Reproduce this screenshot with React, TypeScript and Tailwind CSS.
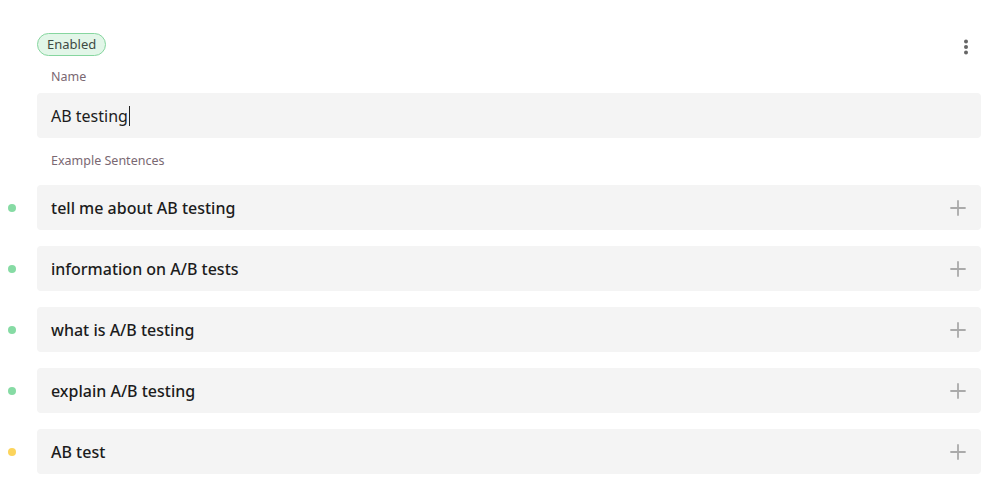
import { Plus } from "lucide-react";

const sentences = [
  { text: "tell me about AB testing", dot: "bg-[#86dba4]" },
  { text: "information on A/B tests", dot: "bg-[#86dba4]" },
  { text: "what is A/B testing", dot: "bg-[#86dba4]" },
  { text: "explain A/B testing", dot: "bg-[#86dba4]" },
  { text: "AB test", dot: "bg-[#fcd45c]" },
];

function Kebab() {
  return (
    <svg width="6" height="16" viewBox="0 0 6 16" fill="#666">
      <circle cx="3" cy="2.5" r="2" />
      <circle cx="3" cy="8" r="2" />
      <circle cx="3" cy="13.5" r="2" />
    </svg>
  );
}

export default function App() {
  return (
    <div
      className="w-[993px] h-[481px] bg-white overflow-hidden text-[#1c1c1c]"
      style={{ fontFamily: "'Noto Sans', Lato, sans-serif" }}
    >
      <div className="pl-[37px] pr-[12px] pt-[33px]">
        <div className="flex justify-between items-start">
          <span className="inline-flex items-center h-[23px] px-[9px] rounded-full border border-[#86d69f] bg-[#e2f6e8] text-[13px] text-[#3f4a43]">
            Enabled
          </span>
          <div className="mt-[6px] mr-[12px]">
            <Kebab />
          </div>
        </div>
        <div className="pl-[14px] mt-[13px] text-[12.5px] text-[#7a6872] leading-[16px]">
          Name
        </div>
        <div className="mt-[8px] h-[45px] rounded-[4px] bg-[#f4f4f4] flex items-center px-[14px] text-[16px]">
          AB testing
          <span className="inline-block w-px h-[20px] bg-[#222] ml-[1px]" />
        </div>
        <div className="pl-[14px] mt-[15px] text-[12.5px] text-[#7a6872] leading-[16px]">
          Example Sentences
        </div>
      </div>
      <div className="mt-[16px] flex flex-col gap-[16px] pr-[12px]">
        {sentences.map((s) => (
          <div key={s.text} className="flex items-center">
            <div className="w-[37px] flex items-center pl-[8px]">
              <span className={`w-[8px] h-[8px] rounded-full ${s.dot}`} />
            </div>
            <div className="flex-1 h-[45px] rounded-[4px] bg-[#f4f4f4] flex items-center justify-between pl-[14px] pr-[11px] text-[16px] font-medium">
              <span>{s.text}</span>
              <Plus size={24} strokeWidth={1.8} className="text-[#aaaaaa]" />
            </div>
          </div>
        ))}
      </div>
    </div>
  );
}
